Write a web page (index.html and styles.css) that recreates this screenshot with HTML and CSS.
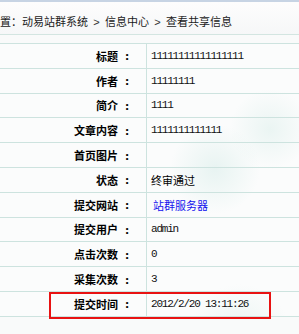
FILE: index.html
```html
<!DOCTYPE html>
<html lang="zh-CN">
<head>
    <meta charset="UTF-8">
    <title>查看共享信息</title>
    <link rel="stylesheet" href="styles.css">
</head>
<body>
    <div class="crumb">
        <span>置：</span>动易站群系统<span class="sep">&gt;</span>信息中心<span class="sep">&gt;</span>查看共享信息
    </div>

    <div class="info">
        <div class="row">
            <div class="label"><span>标题</span><b class="colon">:</b></div>
            <div class="value mono">11111111111111111</div>
        </div>
        <div class="row">
            <div class="label"><span>作者</span><b class="colon">:</b></div>
            <div class="value mono">11111111</div>
        </div>
        <div class="row">
            <div class="label"><span>简介</span><b class="colon">:</b></div>
            <div class="value mono">1111</div>
        </div>
        <div class="row">
            <div class="label"><span>文章内容</span><b class="colon">:</b></div>
            <div class="value mono">1111111111111</div>
        </div>
        <div class="row">
            <div class="label"><span>首页图片</span><b class="colon">:</b></div>
            <div class="value"></div>
        </div>
        <div class="row">
            <div class="label"><span>状态</span><b class="colon">:</b></div>
            <div class="value">终审通过</div>
        </div>
        <div class="row">
            <div class="label"><span>提交网站</span><b class="colon">:</b></div>
            <div class="value"><a class="link" href="#">站群服务器</a></div>
        </div>
        <div class="row">
            <div class="label"><span>提交用户</span><b class="colon">:</b></div>
            <div class="value mono">admin</div>
        </div>
        <div class="row">
            <div class="label"><span>点击次数</span><b class="colon">:</b></div>
            <div class="value mono">0</div>
        </div>
        <div class="row">
            <div class="label"><span>采集次数</span><b class="colon">:</b></div>
            <div class="value mono">3</div>
        </div>
        <div class="row">
            <div class="label"><span>提交时间</span><b class="colon">:</b></div>
            <div class="value mono">2012/2/20 13:11:26</div>
            <!-- 标注框 -->
            <div class="mark"></div>
        </div>
    </div>
</body>
</html>
```

FILE: styles.css
```css
body {
    margin: 0;
    min-height: 334px;
    background: #f9fafa;
    font-family: "Noto Sans CJK SC", sans-serif;
    font-size: 11px;
    color: #000;
}

.crumb {
    height: 28px;
    padding-top: 4px;
    line-height: 30px;
    border-top: 2px solid #c7d4e4;
    border-bottom: 1px solid #d3e5e1;
    background: linear-gradient(#fdfdfd, #f6f7f8);
    color: #1a1a1a;
    white-space: nowrap;
    margin-bottom: 8px;
}

.sep {
    display: inline-block;
    width: 17px;
    text-align: center;
    font-family: "Liberation Sans", sans-serif;
    color: #333;
}

.info {
    border-top: 1px solid #cde3df;
    background:
        radial-gradient(circle at 215px 125px, rgba(196, 228, 222, 0.35), transparent 45px),
        radial-gradient(circle at 270px 85px, rgba(196, 228, 222, 0.3), transparent 40px),
        radial-gradient(circle at 240px 290px, rgba(196, 228, 222, 0.3), transparent 50px),
        #fbfcfc;
}

.row {
    position: relative;
    display: flex;
    height: 24.8px;
    box-sizing: border-box;
    border-bottom: 1px solid #cde3df;
}

.label {
    width: 147px;
    box-sizing: border-box;
    display: flex;
    justify-content: flex-end;
    align-items: center;
    padding-right: 13px;
    border-right: 1px solid #cde3df;
    font-weight: bold;
}

.colon {
    display: inline-block;
    width: 12px;
    margin-left: 3px;
    text-align: center;
    font-family: "Noto Sans", sans-serif;
}

.value {
    flex: 1;
    display: flex;
    align-items: center;
    padding-left: 4px;
    white-space: nowrap;
}

.mono {
    font-family: "Liberation Mono", monospace;
    letter-spacing: -1.2px;
    color: #111;
}

.link {
    color: #1414ee;
    text-decoration: none;
    padding-left: 2px;
}

.mark {
    position: absolute;
    z-index: 2;
    left: 49px;
    top: 0;
    width: 222px;
    height: 27px;
    box-sizing: border-box;
    border: 2px solid #e81212;
}
```
